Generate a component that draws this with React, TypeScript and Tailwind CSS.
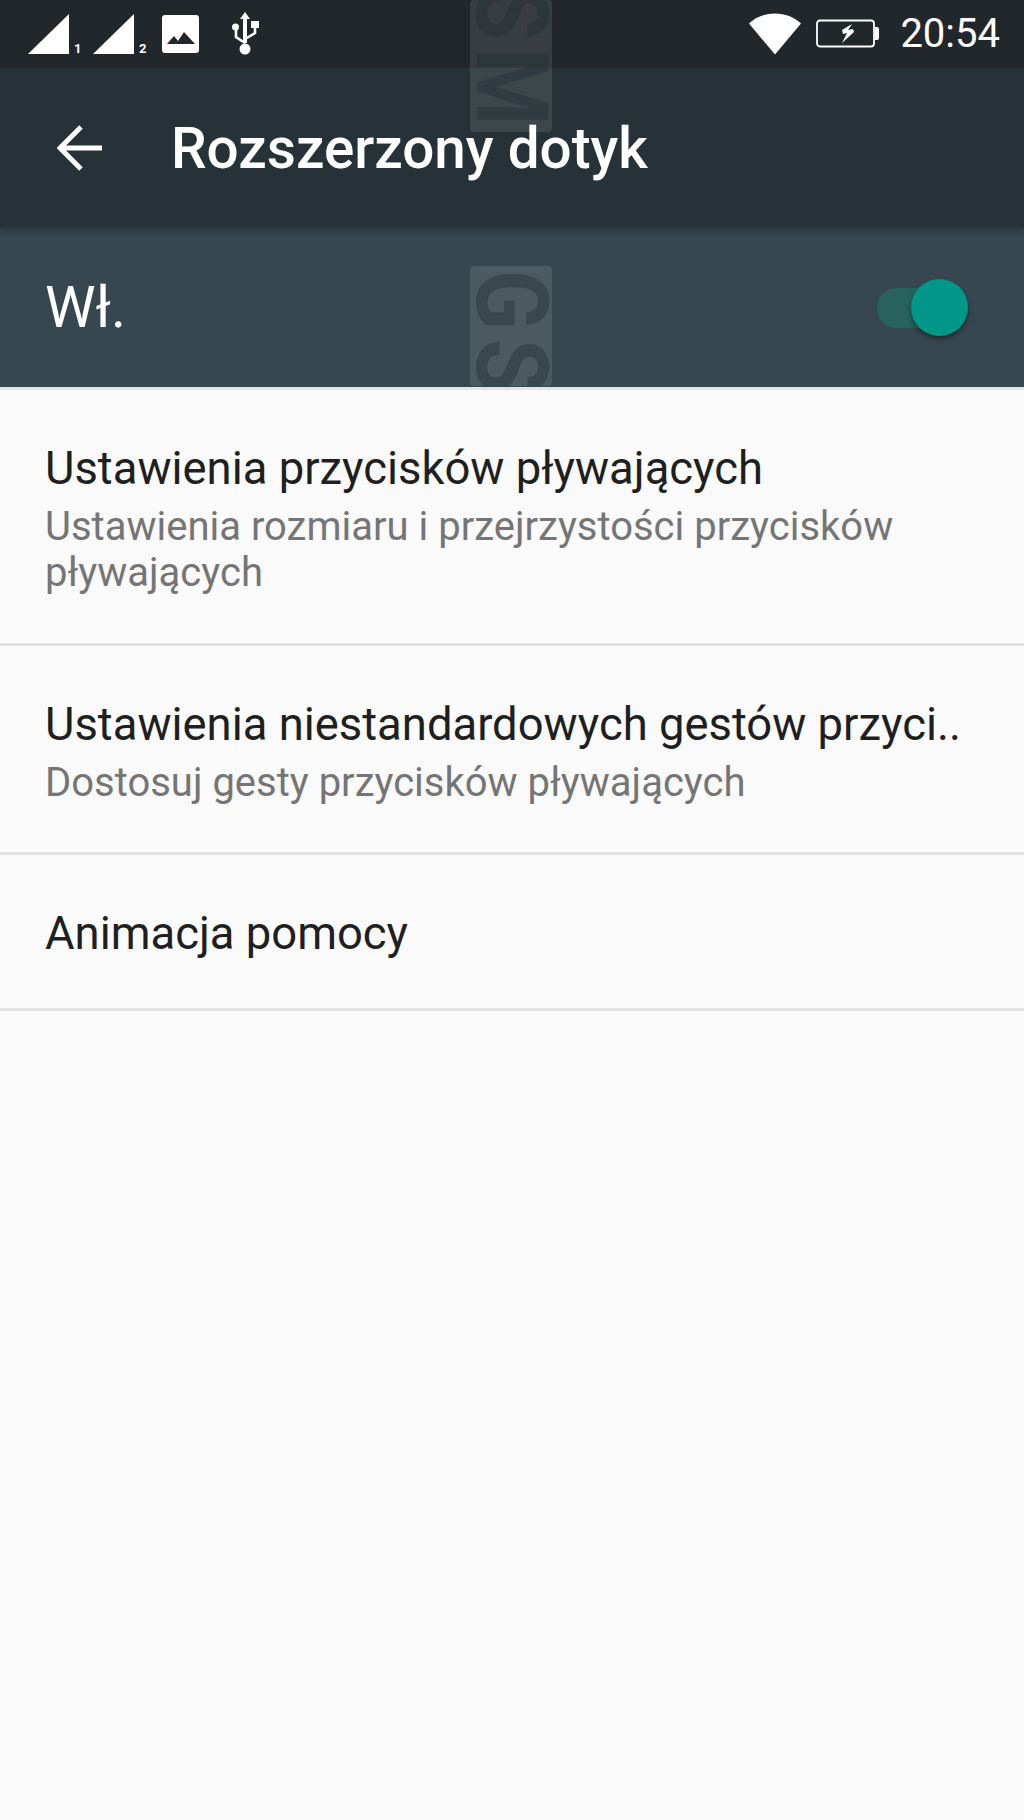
const roboto = { fontFamily: 'Roboto, sans-serif' }

function SignalIcon({ slot }: { slot: string }) {
  return (
    <div className="flex items-end">
      <svg width="42" height="41" viewBox="0 0 42 41">
        <path d="M41 0V40H0Z" fill="#fff" />
      </svg>
      <span className="ml-[4px] w-[9px] text-[13px] leading-[13px] font-bold text-white">{slot}</span>
    </div>
  )
}

function WifiIcon() {
  return (
    <svg width="52" height="42" viewBox="0 0 52 42">
      <path d="M0 10.5C7 4 16 .5 26 .5S45 4 52 10.5L26 41.5Z" fill="#fff" />
    </svg>
  )
}

function BatteryIcon() {
  return (
    <svg width="64" height="30" viewBox="0 0 64 30">
      <rect x="1" y="1.5" width="57" height="26" rx="3" fill="none" stroke="#fff" strokeWidth="1.8" />
      <path d="M59 8h2a2 2 0 0 1 2 2v9a2 2 0 0 1-2 2h-2Z" fill="#fff" />
      <path d="M36 5l-10 6 1 4 4-1-5 10 12-11-1-3-5 1 4-6Z" fill="#fff" />
    </svg>
  )
}

function SwitchToggle() {
  return (
    <div className="flex items-center">
      <div className="h-10 w-[62px] rounded-full bg-[#27625f]" />
      <div className="-ml-[28px] h-[57px] w-[57px] rounded-full bg-[#009688] shadow-[0_3px_5px_rgba(0,0,0,0.4)]" />
    </div>
  )
}

function Watermark({ text, className, textClass }: { text: string; className: string; textClass: string }) {
  return (
    <div className={`absolute left-[470px] w-[82px] overflow-hidden rounded bg-white/10 ${className}`}>
      <div className={`absolute left-1/2 -translate-x-1/2 -translate-y-1/2 rotate-90 scale-x-[0.88] whitespace-nowrap text-[100px] leading-none font-bold tracking-[10px] text-[#1f2d33]/40 ${textClass}`}>
        {text}
      </div>
    </div>
  )
}

function SettingRow({ title, subtitle, className }: { title: string; subtitle?: string; className: string }) {
  return (
    <div className={`flex flex-col justify-center border-b-[3px] border-[#e2e2e2] pl-[45px] pr-[60px] ${className}`}>
      <div className="whitespace-nowrap text-[45.4px] leading-[58px] text-[#1f1f1f]">{title}</div>
      {subtitle && <div className="mt-[6px] text-[40px] leading-[46px] text-[#757575]">{subtitle}</div>}
    </div>
  )
}

export default function App() {
  return (
    <div className="relative h-[1820px] w-[1024px] overflow-hidden bg-[#fafafa]" style={roboto}>
      {/* Status bar */}
      <div className="flex h-[68px] items-center justify-between bg-[#21272b] pl-[28px] pr-[24px]">
        <div className="flex items-center">
          <SignalIcon slot="1" />
          <div className="ml-[10px]">
            <SignalIcon slot="2" />
          </div>
          <div className="ml-[14px] flex h-[38px] w-[37px] flex-col items-center justify-end rounded-[3px] bg-white pb-[9px]">
            <svg width="28" height="12" viewBox="0 0 28 12">
              <path d="M0 12L7 4l4 5 6-9 11 12Z" fill="#21272b" />
            </svg>
          </div>
          <svg className="ml-[31px]" width="30" height="44" viewBox="0 0 30 44">
            <path d="M15 0l5 7h-3v24h-4V7h-3Z" fill="#fff" />
            <circle cx="15" cy="37" r="5.5" fill="#fff" />
            <path d="M15 31l-9-6v-8M15 27l10-6v-6" fill="none" stroke="#fff" strokeWidth="2.6" />
            <circle cx="5.5" cy="15" r="3.5" fill="#fff" />
            <rect x="21" y="9" width="8" height="7" fill="#fff" />
          </svg>
        </div>
        <div className="flex items-center">
          <WifiIcon />
          <div className="ml-[15px]">
            <BatteryIcon />
          </div>
          <span className="ml-[20px] text-[40px] leading-none text-white">20:54</span>
        </div>
      </div>

      {/* Toolbar */}
      <div className="relative flex h-[160px] items-center bg-[#263238] pl-[57px] shadow-[0_3px_6px_rgba(0,0,0,0.25)]">
        <svg width="46" height="46" viewBox="0 0 46 46">
          <path d="M45 23H3M24 2L3 23l21 21" fill="none" stroke="#fff" strokeWidth="5" />
        </svg>
        <h1 className="ml-[68px] pt-[3px] text-[56.6px] font-medium text-white">Rozszerzony dotyk</h1>
      </div>

      {/* Master switch */}
      <div className="flex h-[159px] items-center justify-between bg-[#37474f] pl-[45px] pr-[56px]">
        <span className="text-[57px] text-white">Wł.</span>
        <SwitchToggle />
      </div>

      <div className="h-[3px] bg-[#e4e4e6]" />

      <SettingRow
        className="h-[256px] pt-[2px]"
        title="Ustawienia przycisków pływających"
        subtitle="Ustawienia rozmiaru i przejrzystości przycisków pływających"
      />
      <SettingRow
        className="h-[209px] pt-[3px]"
        title="Ustawienia niestandardowych gestów przyci.."
        subtitle="Dostosuj gesty przycisków pływających"
      />
      <SettingRow className="h-[156px] pt-[5px]" title="Animacja pomocy" />

      <Watermark text="SM" className="top-0 h-[132px]" textClass="top-[60px]" />
      <Watermark text="GS" className="top-[266px] h-[120px]" textClass="top-[70px]" />
    </div>
  )
}
